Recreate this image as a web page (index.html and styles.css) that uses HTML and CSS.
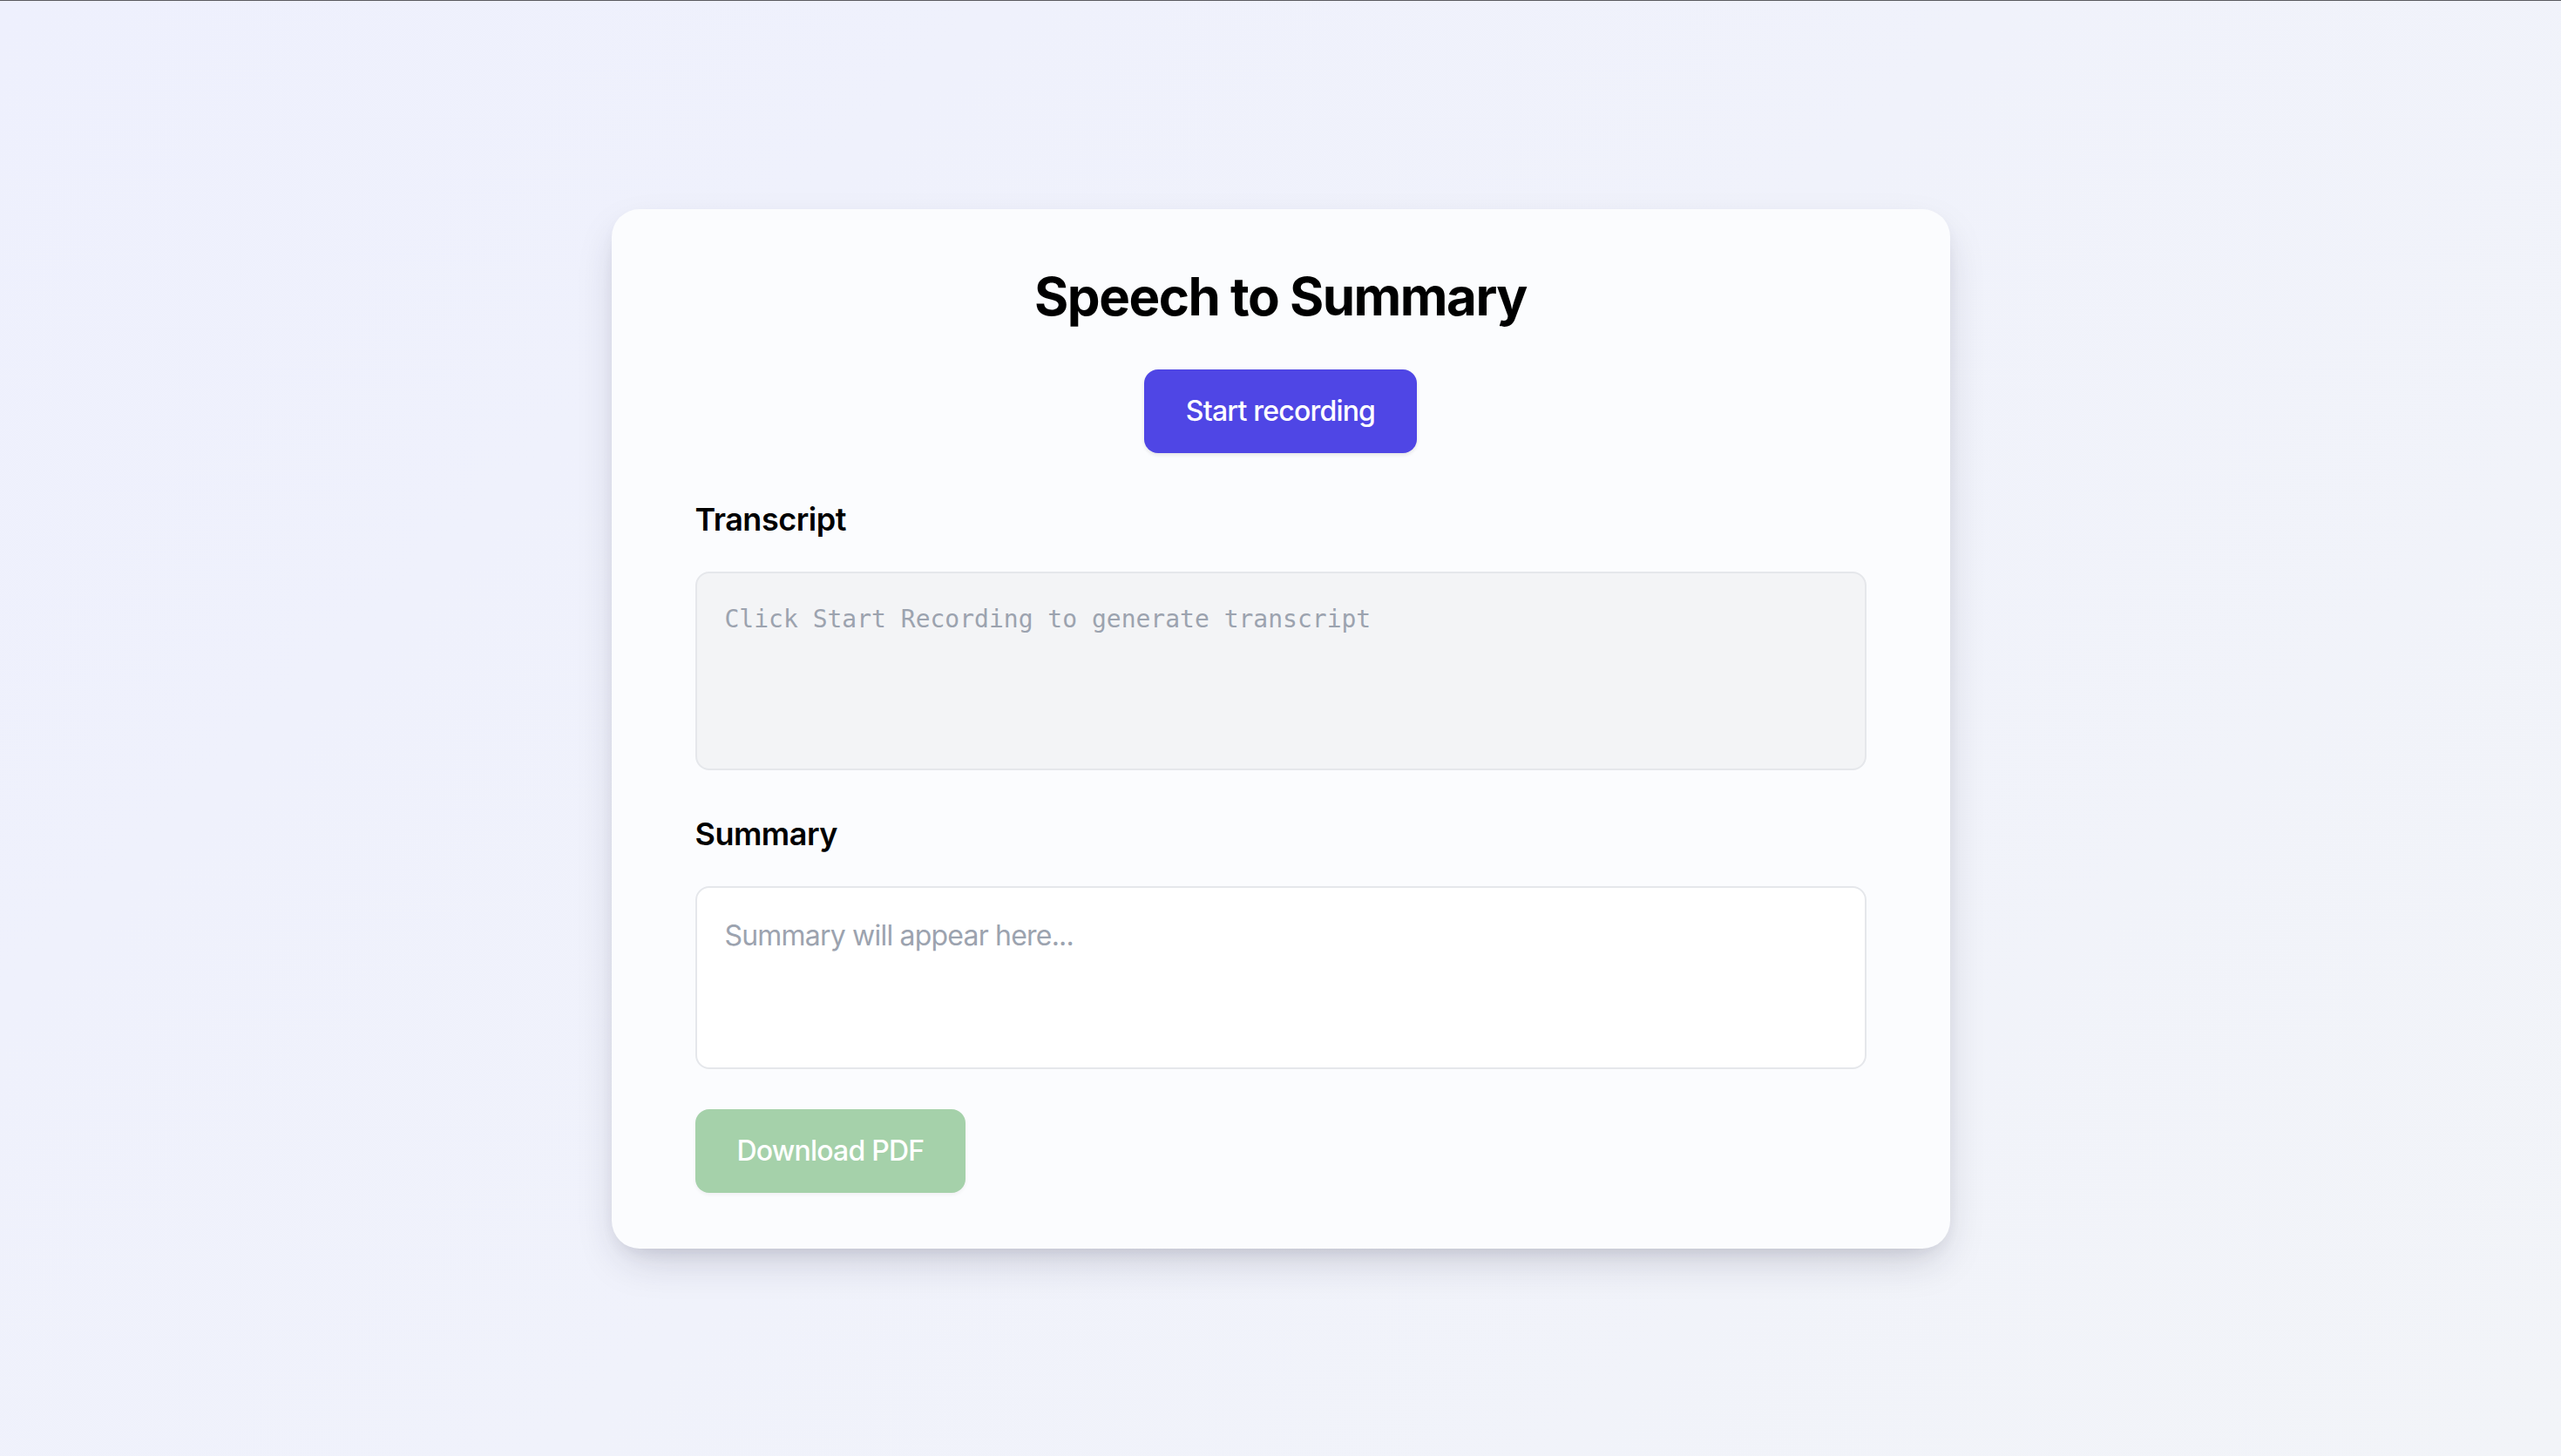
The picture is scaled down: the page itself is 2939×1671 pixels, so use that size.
FILE: index.html
```html
<!DOCTYPE html>
<html lang="en">
<head>
<meta charset="utf-8">
<title>Speech to Summary</title>
<link rel="stylesheet" href="styles.css">
</head>
<body>
<div class="page">
  <main class="card">
    <h1 class="title">Speech to Summary</h1>
    <div class="actions">
      <button class="btn btn-primary" type="button">Start recording</button>
    </div>
    <section class="section">
      <h2 class="section-title">Transcript</h2>
      <textarea class="field field-transcript" readonly placeholder="Click Start Recording to generate transcript"></textarea>
    </section>
    <section class="section">
      <h2 class="section-title">Summary</h2>
      <textarea class="field field-summary" readonly placeholder="Summary will appear here..."></textarea>
    </section>
    <div class="footer">
      <button class="btn btn-download" type="button" disabled>Download PDF</button>
    </div>
  </main>
</div>
</body>
</html>
```

FILE: styles.css
```css
* {
  box-sizing: border-box;
}

html, body {
  margin: 0;
  padding: 0;
}

body {
  min-height: 100vh;
  font-family: Inter, "Noto Sans", "Liberation Sans", sans-serif;
  background: linear-gradient(135deg, #eef0fd 0%, #f0f2fb 50%, #f2f4f8 100%);
  border-top: 1px solid #5b5b60;
  color: #000;
}

.page {
  display: flex;
  justify-content: center;
  padding-top: 239px;
  padding-bottom: 200px;
}

.card {
  width: 1536px;
  background: #fbfcfe;
  border-radius: 32px;
  padding: 64px 96px 64px;
  box-shadow: 0 20px 50px -12px rgba(30, 34, 60, 0.22), 0 8px 20px -8px rgba(30, 34, 60, 0.10);
  display: flex;
  flex-direction: column;
}

.title {
  margin: 0;
  font-size: 60px;
  line-height: 72px;
  font-weight: 700;
  text-align: center;
  letter-spacing: -1.5px;
}

.actions {
  display: flex;
  justify-content: center;
  margin-top: 48px;
}

.btn {
  font-family: Inter, "Noto Sans", "Liberation Sans", sans-serif;
  font-size: 32px;
  line-height: 48px;
  font-weight: 500;
  letter-spacing: -0.8px;
  padding: 24px 48px;
  border: none;
  border-radius: 16px;
  color: #fff;
  cursor: pointer;
}

.btn-primary {
  background: #4f46e5;
  box-shadow: 0 2px 4px rgba(0, 0, 0, 0.10);
}

.btn-download {
  background: #a5d1aa;
  box-shadow: 0 2px 4px rgba(0, 0, 0, 0.05);
  cursor: default;
}

.section {
  display: flex;
  flex-direction: column;
  margin-top: 48px;
}

.section + .section {
  margin-top: 45px;
}

.section-title {
  margin: 0 0 32px;
  font-size: 36px;
  line-height: 56px;
  font-weight: 600;
  letter-spacing: -0.5px;
}

.field {
  display: block;
  width: 100%;
  border: 2px solid #e5e7eb;
  border-radius: 16px;
  resize: none;
  outline: none;
  color: #111827;
}

.field::placeholder {
  color: #9ca3af;
  opacity: 1;
}

.field-transcript {
  height: 228px;
  background: #f3f4f6;
  font-family: "DejaVu Sans Mono", "Liberation Mono", monospace;
  font-size: 28px;
  line-height: 40px;
  padding: 33px 32px 29px;
}

.field-summary {
  height: 210px;
  background: #ffffff;
  font-family: Inter, "Noto Sans", "Liberation Sans", sans-serif;
  font-size: 32px;
  line-height: 48px;
  letter-spacing: -0.8px;
  padding: 31px 32px;
}

.footer {
  display: flex;
  margin-top: 46px;
}
```
